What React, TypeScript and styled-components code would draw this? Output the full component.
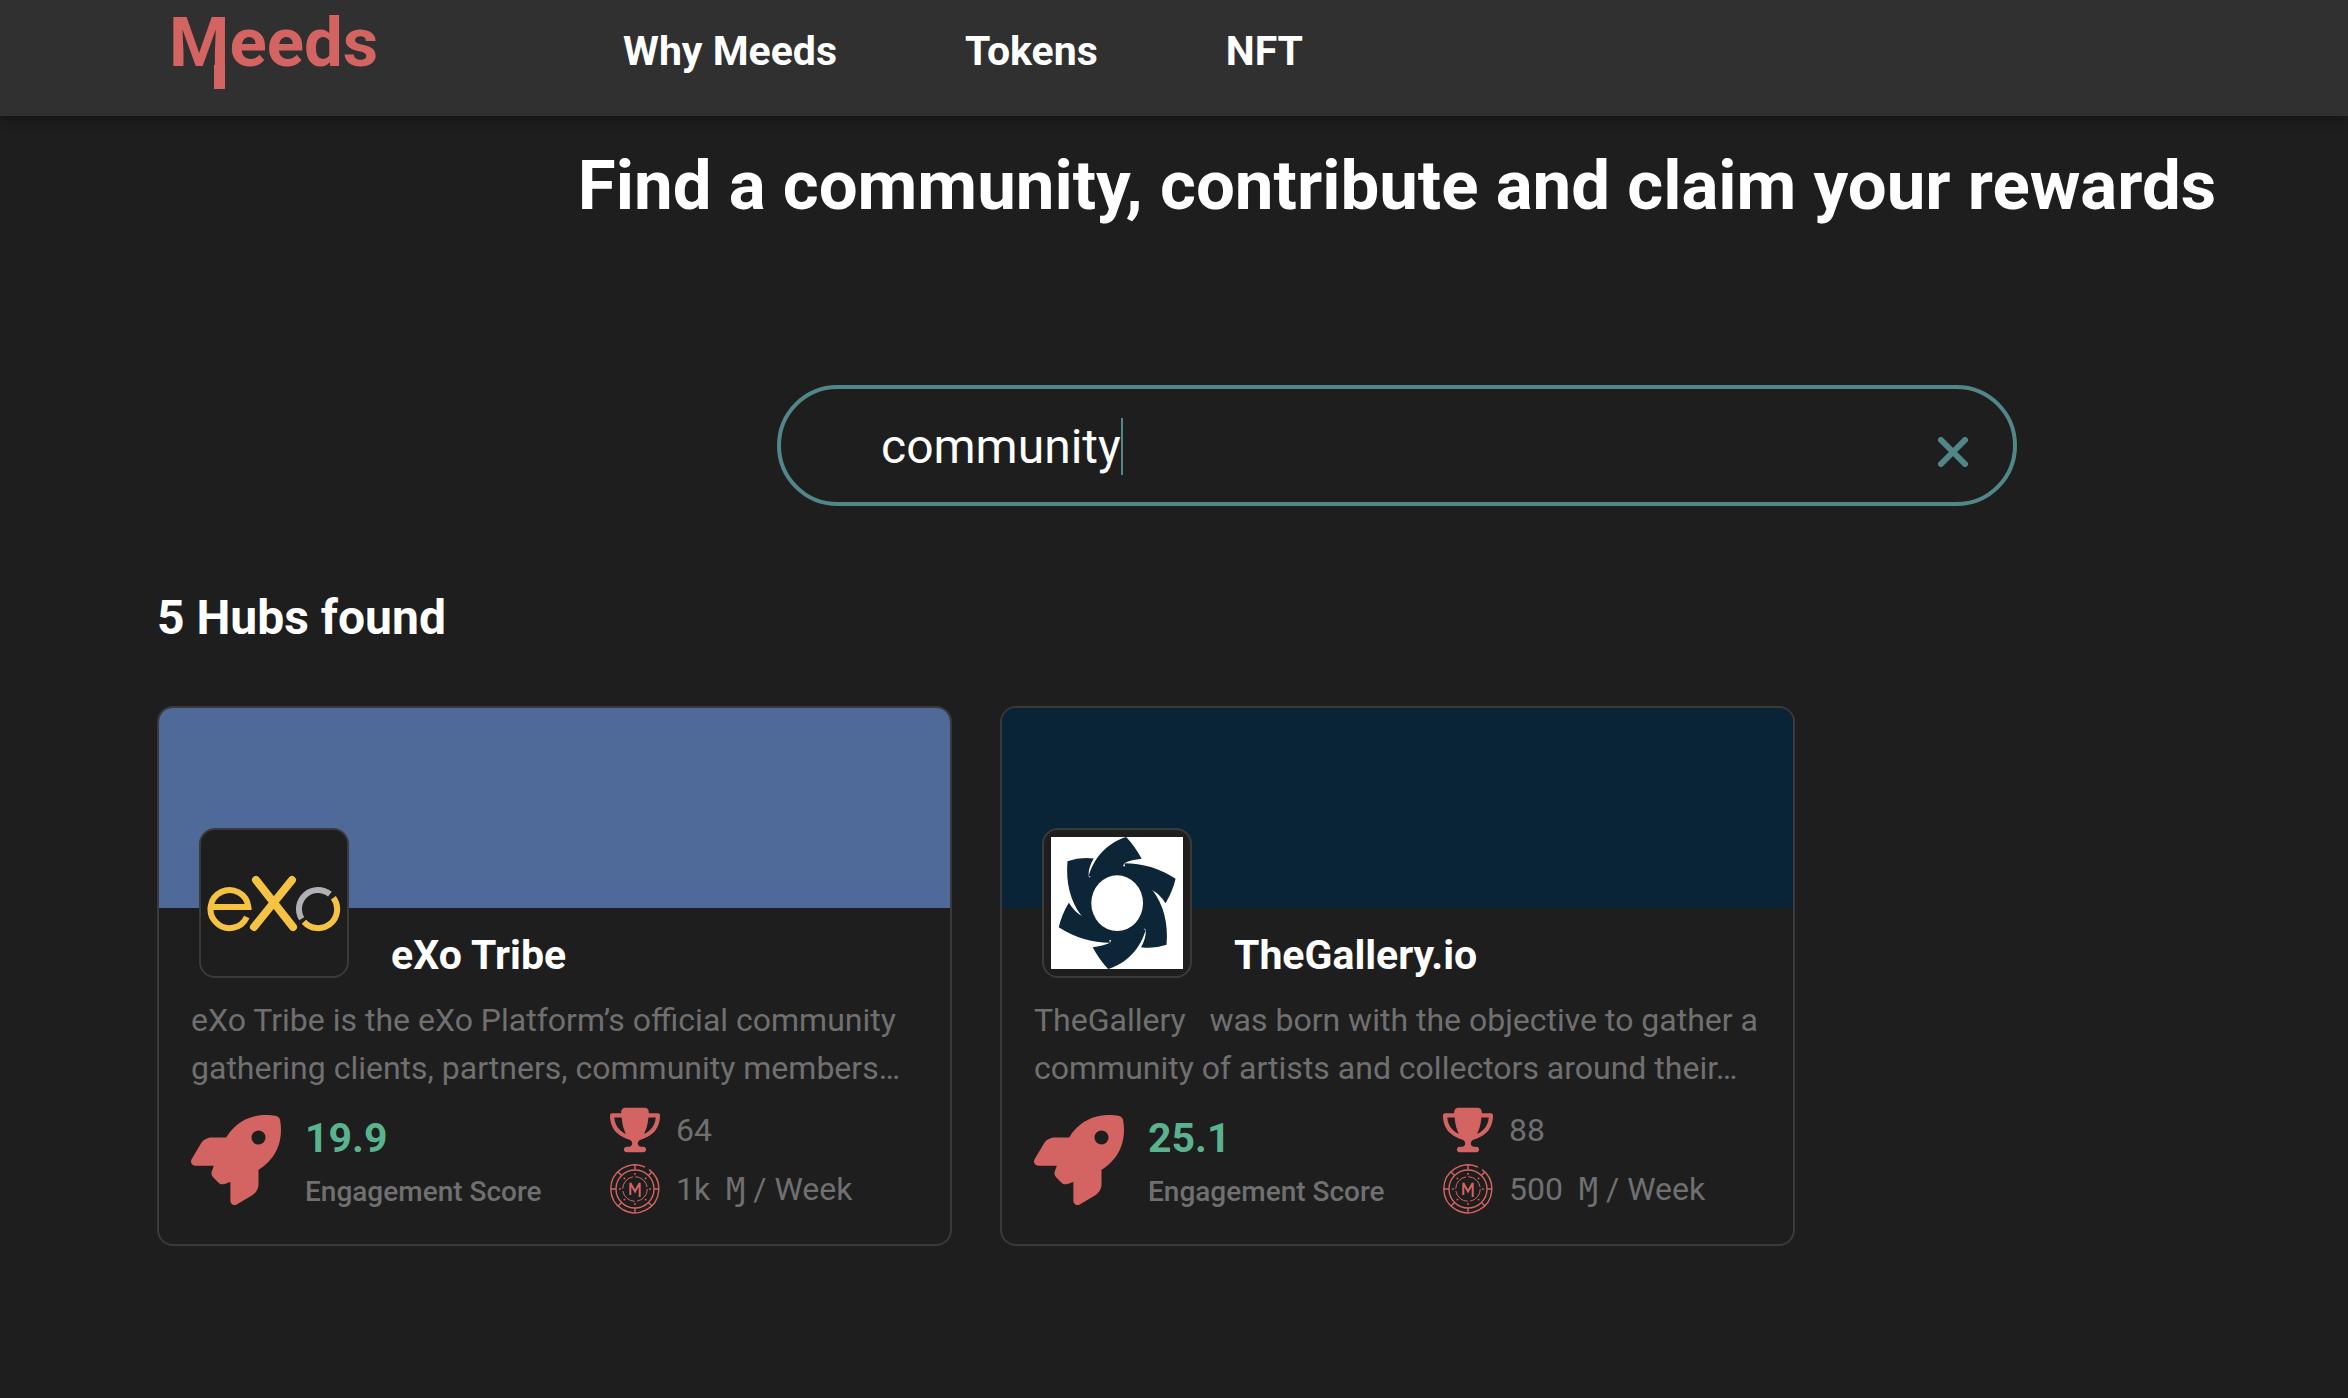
import React, { useState } from "react";
import styled, { createGlobalStyle } from "styled-components";
import { FaRocket, FaTrophy } from "react-icons/fa6";

const c = {
  page: "#1e1e1e",
  bar: "#303030",
  line: "#3a3a3a",
  coral: "#d36461",
  teal: "#52878a",
  green: "#5ab38f",
  muted: "#707070",
};

const GlobalStyle = createGlobalStyle`
  *, *::before, *::after { box-sizing: border-box; }
  body {
    margin: 0;
    background: ${c.page};
    color: #fff;
    font-family: Roboto, "Liberation Sans", "DejaVu Sans", sans-serif;
  }
  h1, h2, h3, p { margin: 0; }
`;

const Header = styled.header`
  display: flex;
  align-items: flex-start;
  height: 116px;
  padding: 0 169px;
  background: ${c.bar};
  box-shadow: 0 4px 10px rgba(0, 0, 0, 0.35);
`;

const LogoLink = styled.a`
  display: block;
  width: 208px;
  color: ${c.coral};
  font-size: 69px;
  font-weight: 700;
  line-height: 85px;
  text-decoration: none;
`;

/* The capital's right stem runs on below the baseline. */
const LogoInitial = styled.span`
  position: relative;

  &::after {
    content: "";
    position: absolute;
    right: 4px;
    bottom: -6px;
    width: 11px;
    height: 24px;
    background: ${c.coral};
  }
`;

const Nav = styled.nav`
  display: flex;
  gap: 128px;
  margin-left: 246px;
  padding-top: 27px;
`;

const NavLink = styled.a`
  color: #fff;
  font-size: 41px;
  font-weight: 700;
  line-height: 48px;
  text-decoration: none;
`;

const Main = styled.main`
  padding: 30px 0 144px 157px;
`;

const Hero = styled.section`
  display: flex;
  flex-direction: column;
  align-items: center;
  margin-left: 421px;
  margin-right: 132px;
`;

const Title = styled.h1`
  font-size: 69px;
  font-weight: 700;
  line-height: 80px;
  white-space: nowrap;
`;

const SearchBox = styled.div`
  display: flex;
  align-items: center;
  width: 100%;
  max-width: 1240px;
  height: 121px;
  margin-top: 159px;
  padding: 0 40px 0 100px;
  border: 4px solid ${c.teal};
  border-radius: 61px;
`;

const SearchField = styled.label`
  display: flex;
  align-items: center;
  flex: 1;
  min-width: 0;
  padding-top: 2px;
  cursor: text;
`;

const SearchInput = styled.input`
  field-sizing: content;
  min-width: 0;
  max-width: 100%;
  padding: 0;
  border: 0;
  outline: 0;
  background: transparent;
  color: #fff;
  caret-color: transparent;
  font-family: inherit;
  font-size: 48px;
  line-height: 56px;
`;

const Caret = styled.span`
  width: 2px;
  height: 57px;
  background: ${c.teal};
`;

const ClearButton = styled.button`
  display: grid;
  place-items: center;
  width: 40px;
  height: 40px;
  margin-top: 12px;
  padding: 0;
  border: 0;
  background: none;
  color: ${c.teal};
`;

const Results = styled.section`
  margin-top: 84px;
`;

const ResultsTitle = styled.h2`
  font-size: 48px;
  font-weight: 700;
  line-height: 56px;
`;

const Grid = styled.div`
  display: flex;
  flex-wrap: wrap;
  gap: 48px;
  margin-top: 60px;
`;

const Card = styled.article`
  width: 795px;
  height: 540px;
  overflow: hidden;
  border: 2px solid ${c.line};
  border-radius: 16px;
`;

const Cover = styled.div<{ $color: string }>`
  height: 200px;
  background: ${(p) => p.$color};
`;

const Identity = styled.div`
  display: flex;
  align-items: flex-end;
  gap: 42px;
  height: 150px;
  margin-top: -80px;
  padding-left: 40px;
`;

const Avatar = styled.div`
  display: grid;
  place-items: center;
  width: 150px;
  height: 150px;
  border: 2px solid ${c.line};
  border-radius: 16px;
  background: ${c.page};
`;

const HubName = styled.h3`
  font-size: 41px;
  font-weight: 700;
  line-height: 46px;
`;

const Description = styled.p`
  margin-top: 18px;
  padding: 0 32px;
  color: ${c.muted};
  font-size: 32px;
  line-height: 48px;
  white-space: pre-line;
`;

const Stats = styled.div`
  display: flex;
  align-items: flex-start;
  padding: 8px 32px 0;
`;

const Score = styled.div<{ $width: number }>`
  display: flex;
  align-items: center;
  gap: 24px;
  flex: 0 0 ${(p) => p.$width}px;
  height: 120px;
  color: ${c.coral};
`;

const ScoreText = styled.div`
  display: flex;
  flex-direction: column;
  padding-top: 8px;
`;

const ScoreValue = styled.strong`
  color: ${c.green};
  font-size: 41px;
  font-weight: 700;
  line-height: 56px;
`;

const ScoreLabel = styled.span`
  color: ${c.muted};
  font-size: 28px;
  font-weight: 500;
  line-height: 52px;
`;

const Facts = styled.div`
  display: flex;
  flex-direction: column;
`;

const Fact = styled.div`
  display: flex;
  align-items: center;
  gap: 16px;
  height: 59px;
  color: ${c.muted};
  font-size: 32px;
  line-height: 48px;
  white-space: pre;

  svg {
    color: ${c.coral};
  }
`;

const TokenSymbol = styled.span`
  font-family: "DejaVu Sans Mono", monospace;
`;

const ExoLogo = () => (
  <svg width="134" height="134" viewBox="0 0 134 134" fill="none" role="img" aria-label="eXo">
    <g stroke="#f6c244" strokeWidth="6">
      <path d="M4 71H41.400A19 19 0 1 0 39.800 81" />
      <path d="M49 44L86 91M85 44L47 91" strokeWidth="8" strokeLinecap="round" />
      <path d="M126.400 61.800A19 19 0 0 1 96.900 85.700" />
    </g>
    <path d="M122.900 58.200A19 19 0 0 0 94.700 82.800" stroke="#b1b0b5" strokeWidth="6" />
  </svg>
);

const GalleryLogo = () => (
  <svg width="132" height="132" viewBox="0 0 393 393" role="img" aria-label="TheGallery">
    <rect width="393" height="393" fill="#fff" />
    <g fill="#0c2537">
      <circle cx="197" cy="197" r="112" />
      <path d="M112 117C128 60 170 16 224 0Q250 28 270 65Q240 68 218 78L197 130Z" />
      <path d="M218 78Q300 78 371 124Q362 162 341 197Q322 168 303 159L240 150Z" />
      <path d="M303 159Q352 225 344 321Q306 334 268 328Q284 300 282 276L240 220Z" />
      <path d="M282 276C266 333 224 377 170 393Q144 365 124 328Q154 325 176 315L197 263Z" />
      <path d="M176 315Q94 315 23 269Q32 231 53 196Q72 225 90 234L154 243Z" />
      <path d="M90 234Q41 168 49 72Q87 59 127 64Q110 93 112 117L154 173Z" />
    </g>
    <ellipse cx="197" cy="197" rx="77" ry="83" fill="#fff" />
  </svg>
);

const TokenIcon = () => (
  <svg width="50" height="50" viewBox="0 0 50 50" fill="none" stroke="currentColor" aria-hidden="true">
    <path d="M39.100 5.600A24 24 0 1 1 35.100 3.200" strokeWidth="1.400" />
    <circle cx="25" cy="25" r="19" strokeWidth="1.400" />
    <circle cx="25" cy="25" r="12.300" strokeWidth="1" strokeDasharray="17 2.300" />
    <path
      d="M25 1V6M25 44V49M1 25H6M44 25H49M8 8L11.600 11.600M38.400 38.400L42 42M8 42L11.600 38.400M38.400 11.600L42 8"
      strokeWidth="1.400"
    />
    <path
      d="M25 10V10M25 40V40M10 25V25M40 25V25M14.400 14.400V14.400M35.600 35.600V35.600M14.400 35.600V35.600M35.600 14.400V14.400"
      strokeWidth="1.800"
      strokeLinecap="round"
    />
    <path d="M20.300 31V19L25 27.500L29.700 19V33" strokeWidth="2" />
  </svg>
);

type Hub = {
  name: string;
  cover: string;
  logo: React.ReactNode;
  description: string;
  score: string;
  scoreWidth: number;
  members: string;
  reward: string;
};

const hubs: Hub[] = [
  {
    name: "eXo Tribe",
    cover: "#4f6a99",
    logo: <ExoLogo />,
    description:
      "eXo Tribe is the eXo Platform’s official community\ngathering clients, partners, community members…",
    score: "19.9",
    scoreWidth: 419,
    members: "64",
    reward: "1k",
  },
  {
    name: "TheGallery.io",
    cover: "#092436",
    logo: <GalleryLogo />,
    description:
      "TheGallery \u00a0 was born with the objective to gather a\ncommunity of artists and collectors around their…",
    score: "25.1",
    scoreWidth: 409,
    members: "88",
    reward: "500",
  },
];

const HubCard = ({ hub }: { hub: Hub }) => (
  <Card>
    <Cover $color={hub.cover} />
    <Identity>
      <Avatar>{hub.logo}</Avatar>
      <HubName>{hub.name}</HubName>
    </Identity>
    <Description>{hub.description}</Description>
    <Stats>
      <Score $width={hub.scoreWidth}>
        <FaRocket size={90} aria-hidden="true" />
        <ScoreText>
          <ScoreValue>{hub.score}</ScoreValue>
          <ScoreLabel>Engagement Score</ScoreLabel>
        </ScoreText>
      </Score>
      <Facts>
        <Fact>
          <FaTrophy size={50} aria-hidden="true" />
          <span>{hub.members}</span>
        </Fact>
        <Fact>
          <TokenIcon />
          <span>
            {hub.reward}
            {"  "}
            <TokenSymbol>Ɱ</TokenSymbol>
            {" / Week"}
          </span>
        </Fact>
      </Facts>
    </Stats>
  </Card>
);

export default function App() {
  const [query, setQuery] = useState("community");
  return (
    <>
      <GlobalStyle />
      <Header>
        <LogoLink href="#home">
          <LogoInitial>M</LogoInitial>eeds
        </LogoLink>
        <Nav aria-label="Main">
          <NavLink href="#why">Why Meeds</NavLink>
          <NavLink href="#tokens">Tokens</NavLink>
          <NavLink href="#nft">NFT</NavLink>
        </Nav>
      </Header>
      <Main>
        <Hero>
          <Title>Find a community, contribute and claim your rewards</Title>
          <SearchBox>
            <SearchField>
              <SearchInput
                aria-label="Search hubs"
                autoFocus
                value={query}
                onChange={(e) => setQuery(e.target.value)}
              />
              <Caret aria-hidden="true" />
            </SearchField>
            <ClearButton type="button" aria-label="Clear search" onClick={() => setQuery("")}>
              <svg width="30" height="30" viewBox="0 0 30 30" stroke="currentColor" strokeWidth="6" strokeLinecap="round">
                <path d="M3 3L27 27M27 3L3 27" />
              </svg>
            </ClearButton>
          </SearchBox>
        </Hero>
        <Results>
          <ResultsTitle>5 Hubs found</ResultsTitle>
          <Grid>
            {hubs.map((hub) => (
              <HubCard key={hub.name} hub={hub} />
            ))}
          </Grid>
        </Results>
      </Main>
    </>
  );
}
